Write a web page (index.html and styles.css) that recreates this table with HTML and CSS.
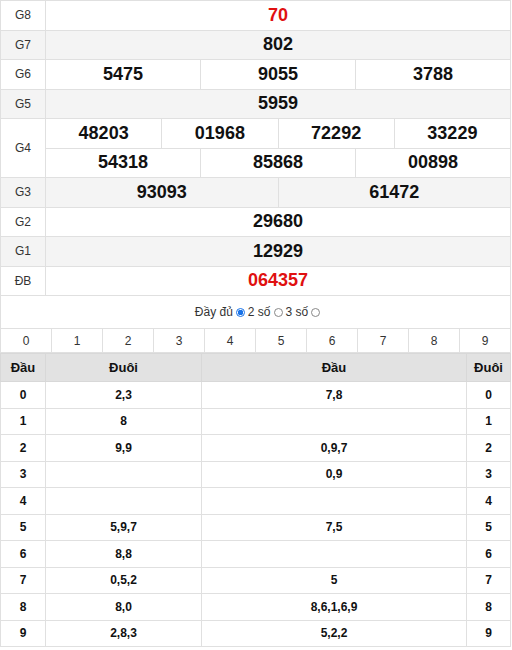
FILE: index.html
```html
<!DOCTYPE html>
<html lang="vi">
<head>
<meta charset="utf-8">
<link rel="stylesheet" href="styles.css">
</head>
<body>
<div class="wrap">
  <table class="kq">
    <colgroup>
      <col class="c-lbl">
      <col><col><col><col><col><col><col><col><col><col><col><col>
    </colgroup>
    <tbody>
      <tr><td class="lbl">G8</td><td colspan="12" class="num red">70</td></tr>
      <tr class="alt"><td class="lbl">G7</td><td colspan="12" class="num">802</td></tr>
      <tr><td class="lbl">G6</td><td colspan="4" class="num">5475</td><td colspan="4" class="num">9055</td><td colspan="4" class="num">3788</td></tr>
      <tr class="alt"><td class="lbl">G5</td><td colspan="12" class="num">5959</td></tr>
      <tr><td class="lbl" rowspan="2">G4</td><td colspan="3" class="num">48203</td><td colspan="3" class="num">01968</td><td colspan="3" class="num">72292</td><td colspan="3" class="num">33229</td></tr>
      <tr><td colspan="4" class="num">54318</td><td colspan="4" class="num">85868</td><td colspan="4" class="num">00898</td></tr>
      <tr class="alt"><td class="lbl">G3</td><td colspan="6" class="num">93093</td><td colspan="6" class="num">61472</td></tr>
      <tr><td class="lbl">G2</td><td colspan="12" class="num">29680</td></tr>
      <tr class="alt"><td class="lbl">G1</td><td colspan="12" class="num">12929</td></tr>
      <tr><td class="lbl">ĐB</td><td colspan="12" class="num red">064357</td></tr>
    </tbody>
  </table>

  <div class="opts">
    <label class="opt">Đầy đủ <span class="radio on"></span></label>
    <label class="opt">2 số <span class="radio"></span></label>
    <label class="opt">3 số <span class="radio"></span></label>
  </div>

  <table class="digits">
    <tr><td>0</td><td>1</td><td>2</td><td>3</td><td>4</td><td>5</td><td>6</td><td>7</td><td>8</td><td>9</td></tr>
  </table>

  <table class="loto">
    <colgroup>
      <col class="l1"><col class="l2"><col class="l3"><col class="l4">
    </colgroup>
    <thead>
      <tr><th>Đầu</th><th>Đuôi</th><th>Đầu</th><th>Đuôi</th></tr>
    </thead>
    <tbody>
      <tr><td>0</td><td>2,3</td><td>7,8</td><td>0</td></tr>
      <tr><td>1</td><td>8</td><td></td><td>1</td></tr>
      <tr><td>2</td><td>9,9</td><td>0,9,7</td><td>2</td></tr>
      <tr><td>3</td><td></td><td>0,9</td><td>3</td></tr>
      <tr><td>4</td><td></td><td></td><td>4</td></tr>
      <tr><td>5</td><td>5,9,7</td><td>7,5</td><td>5</td></tr>
      <tr><td>6</td><td>8,8</td><td></td><td>6</td></tr>
      <tr><td>7</td><td>0,5,2</td><td>5</td><td>7</td></tr>
      <tr><td>8</td><td>8,0</td><td>8,6,1,6,9</td><td>8</td></tr>
      <tr><td>9</td><td>2,8,3</td><td>5,2,2</td><td>9</td></tr>
    </tbody>
  </table>
</div>
</body>
</html>
```

FILE: styles.css
```css
html, body {
  margin: 0;
  padding: 0;
  background: #fff;
}
body {
  font-family: "Liberation Sans", Arial, sans-serif;
  color: #222;
}
.wrap {
  width: 511px;
}
table {
  border-collapse: collapse;
  width: 100%;
  table-layout: fixed;
}
td, th {
  border: 1px solid #e0e0e0;
  padding: 0;
  text-align: center;
}
.kq .c-lbl { width: 45px; }
.kq td { height: 28.5px; }
.kq tr.alt td { background: #f4f4f4; }
.kq td.lbl {
  font-size: 12px;
  color: #333;
  background: #fff;
}
.kq tr.alt td.lbl { background: #f4f4f4; }
.kq td.num {
  font-size: 18px;
  font-weight: bold;
  color: #111;
}
.kq td.red { color: #e01010; }

.opts {
  height: 32px;
  display: flex;
  justify-content: center;
  align-items: center;
  gap: 3px;
  font-size: 12px;
  color: #333;
  border-left: 1px solid #e0e0e0;
  border-right: 1px solid #e0e0e0;
  box-sizing: border-box;
  padding-left: 4px;
}
.opt {
  display: inline-flex;
  align-items: center;
  gap: 3px;
}
.radio {
  display: inline-block;
  width: 9px;
  height: 9px;
  border: 1px solid #888;
  border-radius: 50%;
  box-sizing: border-box;
  background: #fff;
}
.radio.on {
  border: 1px solid #1a73e8;
  background: radial-gradient(circle, #1a73e8 0 2.6px, #fff 3px);
}

.digits td {
  height: 23px;
  font-size: 12px;
  color: #333;
}

.loto .l1 { width: 45px; }
.loto .l2 { width: 156px; }
.loto .l4 { width: 44px; }
.loto th {
  background: #e2e2e2;
  height: 27px;
  font-size: 13px;
  font-weight: bold;
  color: #111;
  border-color: #d8d8d8;
}
.loto td {
  height: 25.5px;
  font-size: 12px;
  font-weight: bold;
  color: #111;
}
```
